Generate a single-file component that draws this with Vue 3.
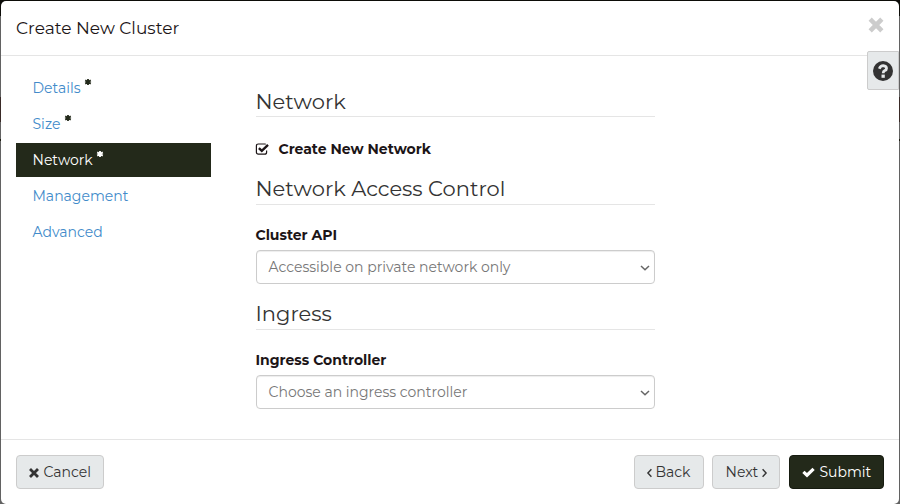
<script setup>
const tabs = [
  { name: 'Details', required: true },
  { name: 'Size', required: true },
  { name: 'Network', required: true, active: true },
  { name: 'Management' },
  { name: 'Advanced' },
]
</script>

<template>
  <div class="backdrop">
    <div class="modal">
      <header class="modal-header">
        <h1>Create New Cluster</h1>
        <svg class="close" viewBox="0 0 14 14"><path d="M2.8 2.8 L11.2 11.2 M11.2 2.8 L2.8 11.2" /></svg>
      </header>

      <div class="modal-body">
        <nav>
          <a v-for="tab in tabs" :key="tab.name" :class="{ active: tab.active }">
            <span>{{ tab.name }}</span>
            <svg v-if="tab.required" class="star" viewBox="0 0 6 6"><path d="M3 0 V6 M.2 1.4 L5.8 4.6 M5.8 1.4 L.2 4.6" /></svg>
          </a>
        </nav>
        <main>
          <h2 class="h-network">Network</h2>
          <label class="check">
            <svg viewBox="0 0 14 12">
              <path class="box" d="M10.6 7.4 V9.2 Q10.6 11.2 8.6 11.2 H2.4 Q.4 11.2 .4 9.2 V3 Q.4 1 2.4 1 H8.6 Q9.3 1 9.7 1.3" />
              <path class="tick" d="M2.9 5.1 L5.8 7.9 L12 1.9" />
            </svg>
            <span>Create New Network</span>
          </label>
          <h2>Network Access Control</h2>
          <label class="field-label">Cluster API</label>
          <div class="select">
            <span>Accessible on private network only</span>
            <svg viewBox="0 0 10 6"><path d="M1 1 L5 4.8 L9 1" /></svg>
          </div>
          <h2 class="h-ingress">Ingress</h2>
          <label class="field-label">Ingress Controller</label>
          <div class="select">
            <span>Choose an ingress controller</span>
            <svg viewBox="0 0 10 6"><path d="M1 1 L5 4.8 L9 1" /></svg>
          </div>
        </main>
      </div>

      <footer>
        <button class="cancel">
          <svg class="times" viewBox="0 0 10 10"><path d="M2 2 L8 8 M8 2 L2 8" /></svg>
          <span>Cancel</span>
        </button>
        <button class="back">
          <svg class="angle" viewBox="0 0 5 8"><path d="M4.4 .3 L.9 4 L4.4 7.7" /></svg>
          <span>Back</span>
        </button>
        <button class="next">
          <span>Next</span>
          <svg class="angle" viewBox="0 0 5 8"><path d="M.6 .3 L4.1 4 L.6 7.7" /></svg>
        </button>
        <button class="submit">
          <svg class="ok" viewBox="0 0 13 10"><path d="M1.4 4.8 L5 8.2 L11.6 1.8" /></svg>
          <span>Submit</span>
        </button>
      </footer>

      <button class="help">
        <svg viewBox="0 0 20 20">
          <circle cx="10" cy="10" r="10" />
          <path d="M6.3 7.7 Q7.5 4.7 10.2 4.7 Q13.5 5 13.5 7.4 Q13.5 8.8 11.8 9.6 Q10.2 10.4 10.2 12.3" />
          <rect x="8.5" y="13.6" width="3.3" height="3.2" />
        </svg>
      </button>
    </div>
  </div>
</template>

<style>
body { overflow: hidden; }
</style>

<style scoped>
* { box-sizing: border-box; }
.backdrop {
  width: 900px; height: 504px; padding: 1px 1px 0;
  background: linear-gradient(#0c0c08 0 16px, #626262 16px 97px, #392a27 97px 122px, #626262 122px 139px, #1c1c10 139px 141px, #626262 141px);
  font: 14px/20px Montserrat, Inter, sans-serif;
  color: #333;
}
.modal { position: relative; height: 503px; display: flex; flex-direction: column; background: #fff; border-radius: 5px; }
.modal-header { display: flex; justify-content: space-between; height: 55px; padding: 15px 16px 0 15px; border-bottom: 1px solid #e5e5e5; }
h1 { margin: 0; font-size: 17px; line-height: 25px; font-weight: 400; color: #1c1517; }
svg { display: block; flex: none; overflow: visible; }
path { fill: none; stroke: currentColor; }
.close { width: 14px; height: 14px; margin-top: 2px; color: #ccc; }
.close path { stroke-width: 4.6; stroke-linecap: square; stroke-linejoin: round; }
.modal-body { flex: 1; display: flex; padding: 15px 15px 0; }
nav { width: 195px; display: flex; flex-direction: column; gap: 2px; }
nav a { display: flex; height: 34px; padding: 7px 16.5px; color: #428bca; }
nav .active { background: #23291a; color: #fff; }
.star { width: 6px; height: 6px; margin: 0.5px 0 0 4.4px; color: #23291a; }
.active .star { color: #fff; }
.star path { stroke-width: 1.8; }
main { width: 399px; margin-left: 45px; display: flex; flex-direction: column; }
h2 { margin: 0; height: 29px; border-bottom: 1px solid #e5e5e5; font-size: 21px; line-height: 26px; font-weight: 400; text-indent: -0.5px; }
.h-network { margin-top: 17px; line-height: 28px; }
.check { display: flex; height: 20px; margin: 22px 0 17px; color: #1c1517; font-weight: 700; }
.check svg { width: 14px; height: 12px; margin: 4px 8.5px 0 0; }
.box { stroke-width: 1.2; }
.tick { stroke-width: 2.4; }
.field-label { height: 20px; margin: 20px 0 5px; font-weight: 700; color: #1c1517; text-indent: -0.5px; }
.select { display: flex; justify-content: space-between; align-items: center; height: 34px; padding: 0 4px 0 11.5px; border: 1px solid #ccc; border-radius: 4px; box-shadow: inset 0 1px 1px rgba(0,0,0,.075); color: #777; }
.select svg { width: 10px; height: 6px; margin-top: 1px; color: #666; }
.select path { stroke-width: 1.5; }
.h-ingress { margin-top: 17px; }
footer { display: flex; height: 65px; padding: 15px; border-top: 1px solid #e5e5e5; }
button { display: flex; align-items: center; height: 34px; padding: 0 12px; border: 1px solid #ccc; border-radius: 4px; background: #e6e9ea; color: #333; font: inherit; }
.cancel { width: 88px; margin-right: auto; }
.times { width: 10px; height: 10px; margin: 1px 4.5px 0 0; }
.times path { stroke-width: 2.8; stroke-linecap: square; }
.back { width: 70px; margin-right: 8px; }
.next { width: 68px; margin-right: 9px; padding-left: 12.5px; }
.submit { width: 95px; background: #23291a; border-color: #161b10; color: #fff; }
.angle { width: 5px; height: 8px; margin-top: 1px; }
.angle path { stroke-width: 1.4; }
.back .angle { margin-right: 3.5px; }
.next .angle { margin-left: 4px; }
.ok { width: 13px; height: 10px; margin-right: 4.5px; }
.ok path { stroke-width: 3.2; }
.help { position: absolute; right: 0; top: 50px; width: 32px; height: 39px; padding: 0 5px; border-radius: 2px 0 0 2px; }
.help svg { width: 20px; height: 20px; }
.help circle { fill: #333; }
.help path { stroke: #e6e9ea; stroke-width: 2.8; }
.help rect { fill: #e6e9ea; }
span { white-space: nowrap; }
</style>
